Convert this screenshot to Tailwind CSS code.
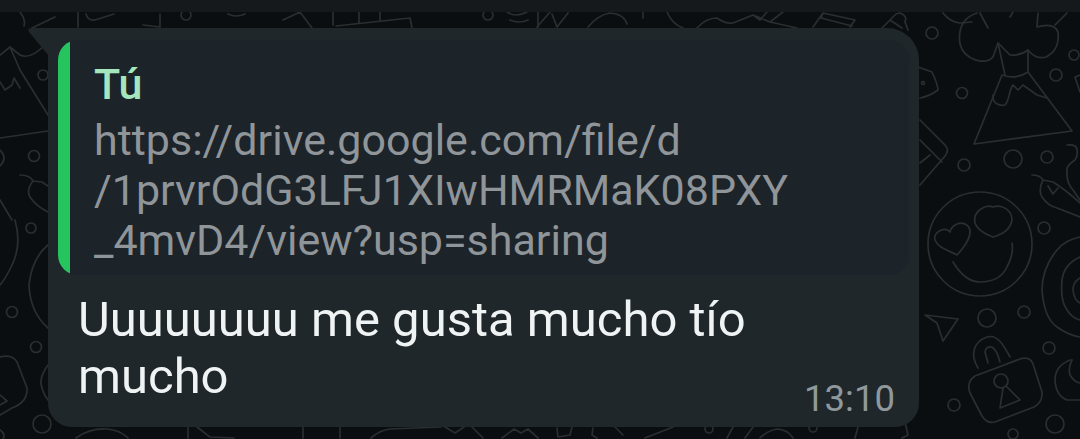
<!DOCTYPE html>
<html lang="es">
<head>
    <meta charset="UTF-8">
    <title>Mensaje</title>
    <script src="https://cdn.jsdelivr.net/npm/@tailwindcss/browser@4"></script>
</head>
<body class="bg-[#0b0e11] w-[1080px] h-[439px] overflow-hidden relative font-['Roboto',sans-serif]">
    <!-- doodle wallpaper -->
    <svg class="absolute left-0 top-0" width="1080" height="439" fill="none" stroke="#2a2e31" stroke-width="1.7" stroke-linejoin="round" stroke-linecap="round">
        <!-- volcano -->
        <path d="M974 144 1072 131 1028 72Q1016 80 1002 75Z"/>
        <path d="M998 43 1005 75M1028 50V72"/>
        <path d="M977 13C962 18 958 30 960 44 964 60 986 66 993 57L998 43 1010 55Q1020 56 1028 50 1036 60 1046 57 1060 50 1058 32 1054 22 1037 27L1038 13"/>
        <path d="M943 13Q950 22 960 23L972 22M980 13 988 28M1010 17 1013 12M1067 13 1055 25"/>
        <path d="M993 95C992 104 1000 106 1005 105 1010 100 1008 92 1013 85L1018 90 1023 85 1037 95 1047 98"/>
        <circle cx="932" cy="33" r="6"/><circle cx="962" cy="93" r="5.5"/><circle cx="1056" cy="75" r="6"/><circle cx="1074" cy="55" r="5"/>
        <circle cx="1013" cy="159" r="9"/><circle cx="1047" cy="157" r="6"/><circle cx="964" cy="165" r="6"/>
        <path d="M1075 77 1080 75M1075 77 1080 92"/>
        <!-- things peeking out of the bubble -->
        <path d="M918 67 932 72Q938 85 938 90 930 96 920 98"/><circle cx="923" cy="83" r="1.5"/>
        <path d="M920 120 945 145Q950 150 945 156L920 185M920 140 942 162M920 163 930 155"/>
        <!-- chilli -->
        <path d="M1032 175Q1040 175 1043 180 1038 190 1042 197 1048 206 1057 208L1080 217M1043 180 1053 182Q1066 190 1080 203M1048 186 1053 194 1058 188"/>
        <path d="M1067 145Q1077 144 1077 150 1078 156 1075 160 1066 166 1067 170 1066 182 1073 190L1080 200"/>
        <!-- smiley -->
        <circle cx="980" cy="244" r="52"/>
        <path d="M953 262Q965 282 980 282 1000 282 1007 267 1014 254 1012 243"/>
        <path d="M957 255C948 250 938 248 935 240 933 232 945 226 950 232 952 224 962 220 968 226 973 232 968 243 957 255Z"/>
        <path d="M975 223C972 212 985 204 993 207 1002 204 1012 210 1012 220 1010 230 1003 234 993 237 985 234 977 230 975 223Z"/>
        <circle cx="1044" cy="228" r="6"/><circle cx="987" cy="318" r="9"/><circle cx="1024" cy="312" r="6"/><circle cx="1049" cy="348" r="6"/><circle cx="954" cy="405" r="6"/><circle cx="1055" cy="424" r="9"/><circle cx="1013" cy="434" r="5"/>
        <path d="M925 315 958 319 943 341 937 323Z"/>
        <!-- lock -->
        <path d="M978 368C970 355 973 342 987 337 997 334 1003 344 1010 357M988 363 985 352Q986 346 992 347 997 350 1000 362"/>
        <path d="M975 376 1020 359Q1030 356 1033 364L1042 392Q1043 402 1034 407L995 422Q987 424 982 416L970 393Q966 382 975 376Z"/>
        <circle cx="1001" cy="381" r="7"/><path d="M1003 388 1000 408 1020 400 1006 386"/>
        <!-- swirl and moon -->
        <path d="M1080 237Q1065 240 1057 250 1042 268 1042 290 1044 318 1057 327 1068 335 1080 337M1080 257Q1064 264 1062 280 1060 300 1067 310 1072 318 1080 320M1080 278Q1073 282 1073 290 1074 300 1080 303"/>
        <path d="M1070 360Q1055 366 1055 380 1056 396 1067 400L1080 400M1072 360Q1068 368 1070 375 1074 382 1080 383"/>
        <path d="M905 422 908 435 902 438"/>
        <!-- left edge -->
        <path d="M20 12Q26 20 24 26M0 55 10 47 20 55Q30 60 45 45M10 47 20 70 48 115M0 82 5 90 12 85 14 78 20 88M0 138 48 131"/>
        <path d="M32 28 55 17"/>
        <circle cx="43" cy="75" r="5"/><circle cx="34" cy="156" r="5.5"/><path d="M0 150Q8 158 0 166"/>
        <path d="M20 175Q30 175 33 181 26 190 30 197 36 206 48 212M33 181 42 182 48 186M0 200 12 220"/>
        <path d="M15 220Q22 245 12 265 6 278 0 285"/>
        <circle cx="31" cy="228" r="5"/>
        <path d="M48 245Q32 258 29 285 30 312 48 328"/>
        <circle cx="12" cy="312" r="5.5"/><circle cx="36" cy="347" r="5.5"/>
        <path d="M0 357Q12 354 17 362L27 388Q28 402 12 408L0 415M0 395 7 401 0 405M48 365Q40 376 41 384 43 394 48 400"/>
        <circle cx="42" cy="424" r="9"/><path d="M0 430Q6 434 3 439"/>
        <!-- top edge -->
        <path d="M78 12V27M86 14Q88 21 95 20L114 14M160 14V27 L143 25M228 14Q236 18 245 14M283 20 300 12 312 28M333 12V25M336 26 410 18 412 28M359 12V23M380 12V21"/>
        <circle cx="186" cy="15" r="5"/><circle cx="488" cy="15" r="5"/>
        <path d="M510 20Q519 24 528 20M507 12Q516 18 527 12M538 12V27"/>
        <path d="M537 27 550 12M557 27 552 14M557 27 568 13M588 27Q598 15 610 13 624 14 627 24M643 12V18M667 12Q672 24 683 28M697 28Q706 18 717 18 725 24 733 23L753 15 760 20 767 12M753 15 770 22 783 12M770 22 797 28"/>
        <path d="M813 27 823 13 855 20 850 27M823 13 821 18 852 26"/>
        <path d="M882 28 896 14 900 13Q908 16 905 22L908 30M890 20 902 28"/>
        <!-- bottom edge -->
        <path d="M76 438Q90 428 107 429 120 430 128 438M188 427V438M197 427 210 437 234 438M303 427V438M340 427V438M371 438Q380 430 390 429L441 427M445 427 455 433 464 427M472 427 483 438"/>
        <path d="M502 438 514 429 521 433 528 429 538 438M557 428 558 437 570 435 572 427M593 428 592 435 597 438M615 427 623 435M645 438 673 427M733 427 727 438M753 427 745 438M760 438Q768 430 778 429 788 430 793 438M858 427 855 438"/>
        <circle cx="709" cy="429" r="4"/><circle cx="813" cy="428" r="4"/>
    </svg>

    <!-- top strip -->
    <div class="relative h-[12px] bg-[#15191c]"></div>

    <!-- bubble -->
    <div class="relative ml-[48px] mt-[16px] w-[871px] h-[399px] bg-[#1f272a] rounded-tr-[32px] rounded-b-[24px] pt-[12px] px-[10px]">
        <svg class="absolute left-[-20px] top-0" width="21" height="28" fill="#1f272a"><path d="M21 0H3Q-1 0 1 4L21 28Z"/></svg>
        <!-- quoted message -->
        <div class="flex h-[235px] bg-[#1c2329] rounded-[20px] overflow-hidden">
            <div class="w-[12px] bg-[#25c45f]"></div>
            <div class="pl-[24px] pt-[13px]">
                <div class="text-[43px] leading-[62px] font-medium text-[#a5e6bd]">Tú</div>
                <div class="text-[43px] leading-[50px] text-[#8f9599] whitespace-pre-line">https://drive.google.com/file/d
/1prvrOdG3LFJ1XIwHMRMaK08PXY
_4mvD4/view?usp=sharing</div>
            </div>
        </div>
        <div class="flex justify-between items-end pl-[20px] pr-[14px]">
            <p class="text-[49px] leading-[57px] pt-[16px] text-[#f0f3f4]">Uuuuuuuu me gusta mucho tío<br>mucho</p>
            <span class="text-[36.5px] leading-[40px] text-[#8f989c] mb-[-14px]">13:10</span>
        </div>
    </div>
</body>
</html>
